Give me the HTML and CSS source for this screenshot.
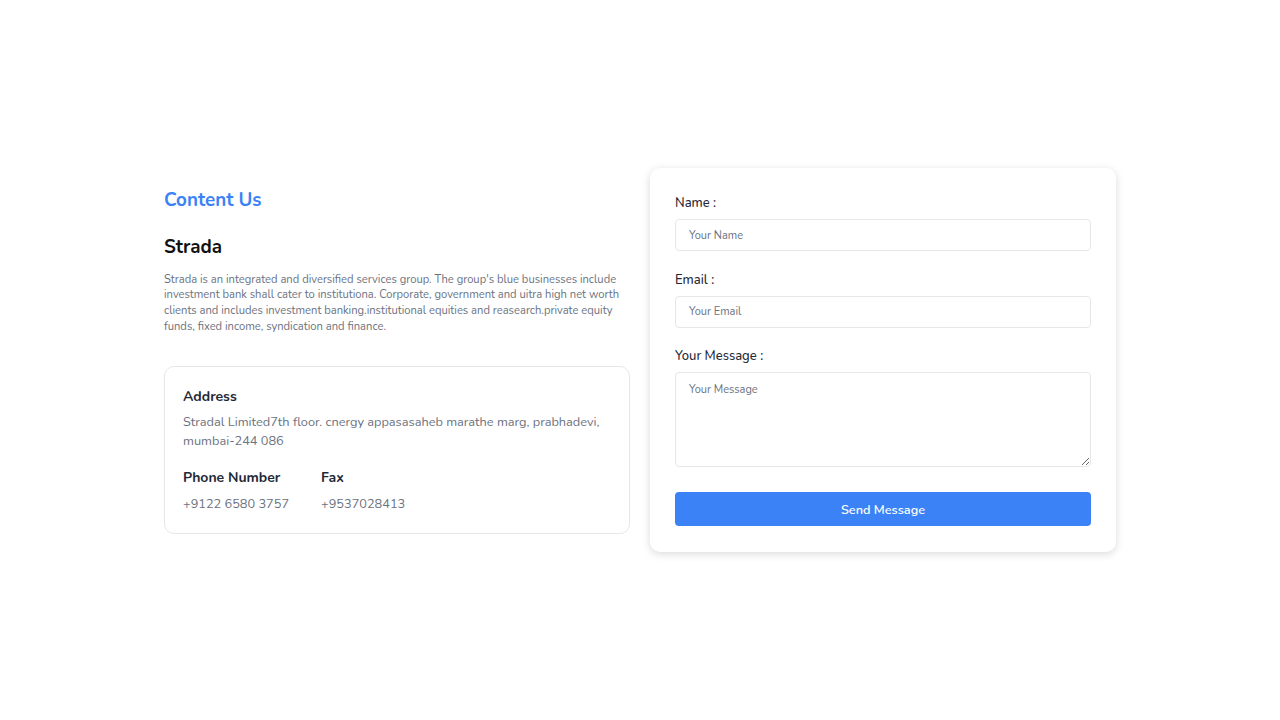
FILE: index.html
```html
<!DOCTYPE html>
<html lang="en">
<head>
<meta charset="utf-8">
<title>Contact</title>
<link rel="stylesheet" href="styles.css">
</head>
<body>
<main class="page">
  <section class="contact">
    <div class="info">
      <h2 class="eyebrow">Content Us</h2>
      <h3 class="company">Strada</h3>
      <p class="desc">Strada is an integrated and diversified services group. The group's blue businesses include investment bank shall cater to institutiona. Corporate, government and uitra high net worth clients and includes investment banking.institutional equities and reasearch.private equity funds, fixed income, syndication and finance.</p>
      <div class="address-box">
        <h4 class="box-title">Address</h4>
        <p class="box-text">Stradal Limited7th floor. cnergy appasasaheb marathe marg, prabhadevi, mumbai-244 086</p>
        <div class="numbers">
          <div class="num">
            <h4 class="box-title">Phone Number</h4>
            <p class="box-text num-text">+9122 6580 3757</p>
          </div>
          <div class="num">
            <h4 class="box-title">Fax</h4>
            <p class="box-text num-text">+9537028413</p>
          </div>
        </div>
      </div>
    </div>
    <form class="card">
      <label class="field">
        <span class="label">Name :</span>
        <input class="input" type="text" placeholder="Your Name">
      </label>
      <label class="field">
        <span class="label">Email :</span>
        <input class="input" type="email" placeholder="Your Email">
      </label>
      <label class="field field-last">
        <span class="label">Your Message :</span>
        <textarea class="input textarea" placeholder="Your Message"></textarea>
      </label>
      <button class="send" type="button">Send Message</button>
    </form>
  </section>
</main>
</body>
</html>
```
FILE: styles.css
```css
* { box-sizing: border-box; }
html, body { margin: 0; padding: 0; }
body {
  font-family: "Nunito", "Noto Sans", "Open Sans", sans-serif;
  color: #111827;
  background: #ffffff;
}
.page {
  height: 720px;
  display: flex;
  align-items: center;
  justify-content: center;
}
.contact {
  width: 952px;
  display: grid;
  grid-template-columns: 1fr 1fr;
  gap: 20px;
  align-items: center;
}
.info { display: flex; flex-direction: column; }
.eyebrow {
  margin: 0;
  font-size: 18.8px;
  font-weight: 700;
  line-height: 28px;
  color: #3b82f6;
}
.company {
  margin: 19px 0 0;
  font-size: 18.8px;
  font-weight: 700;
  line-height: 28px;
  color: #111;
}
.desc {
  margin: 11px 0 0;
  font-size: 11.2px;
  line-height: 15.6px;
  color: #6b7280;
}
.address-box {
  margin-top: 32px;
  border: 1px solid #e5e7eb;
  border-radius: 10px;
  padding: 19px 18px;
}
.box-title {
  margin: 0;
  font-size: 14px;
  font-weight: 700;
  line-height: 22px;
  color: #1f2937;
}
.box-text {
  margin: 5px 0 0;
  font-size: 12.75px;
  line-height: 19px;
  color: #6b7280;
}
.num-text { margin-top: 6px; }
.numbers {
  display: flex;
  gap: 32px;
  margin-top: 16px;
}
.card {
  background: #fff;
  border-radius: 10px;
  box-shadow: 0 2px 8px rgba(0,0,0,0.15);
  padding: 26px 25px 26px;
  display: flex;
  flex-direction: column;
}
.field { display: flex; flex-direction: column; margin-bottom: 19.5px; }
.field-last { margin-bottom: 0; }
.label {
  font-size: 13px;
  font-weight: 500;
  line-height: 19px;
  color: #1f2937;
  margin-bottom: 6px;
}
.input {
  height: 32px;
  border: 1px solid #e5e7eb;
  border-radius: 4px;
  padding: 0 13px;
  font-family: inherit;
  font-size: 11px;
  color: #374151;
  outline: none;
}
.input::placeholder { color: #6b7280; }
.textarea {
  height: 95px;
  padding: 9px 13px;
  resize: vertical;
}
.send {
  margin-top: 25px;
  height: 34px;
  border: none;
  border-radius: 4px;
  background: #3b82f6;
  color: #fff;
  font-family: "Nunito", "Noto Sans", sans-serif;
  font-size: 12.7px;
  font-weight: 600;
}
```
